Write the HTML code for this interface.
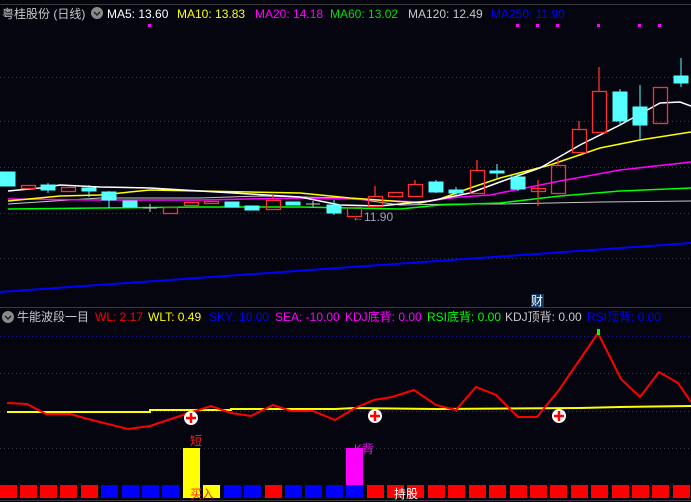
<!DOCTYPE html>
<html><head><meta charset="utf-8"><style>
html,body{margin:0;padding:0;background:#04050f;width:691px;height:502px;overflow:hidden}
svg{display:block}
text{font-family:"Liberation Sans","Noto Sans CJK SC",sans-serif;font-size:12px}
</style></head><body>
<svg width="691" height="502" viewBox="0 0 691 502">
<rect width="691" height="502" fill="#04050f"/>
<line x1="0" y1="4.5" x2="691" y2="4.5" stroke="#3a3a3a"/>
<g stroke="#3c3c46" stroke-dasharray="1 3">
<line x1="0" y1="77.5" x2="691" y2="77.5"/><line x1="0" y1="121.5" x2="691" y2="121.5"/><line x1="0" y1="167.5" x2="691" y2="167.5"/><line x1="0" y1="213.5" x2="691" y2="213.5"/><line x1="0" y1="258.5" x2="691" y2="258.5"/>
<line x1="0" y1="373.5" x2="691" y2="373.5"/><line x1="0" y1="411.5" x2="691" y2="411.5"/><line x1="0" y1="448.5" x2="691" y2="448.5"/>
</g>
<line x1="0" y1="336.5" x2="691" y2="336.5" stroke="#1a1a90" stroke-dasharray="1 3"/>
<line x1="0" y1="307.5" x2="691" y2="307.5" stroke="#3a3a3a"/>
<line x1="0" y1="500.5" x2="691" y2="500.5" stroke="#3a3a3a"/>
<!-- header -->
<circle cx="97" cy="13" r="6" fill="#8a8a8a"/><path d="M94 12 L97 15 L100 12" stroke="#222" stroke-width="1.5" fill="none"/>
<text x="2" y="18" fill="#c8c8c8">粤桂股份 (日线)</text>
<text x="107" y="18" fill="#ffffff">MA5: 13.60</text>
<text x="177" y="18" fill="#ffff00">MA10: 13.83</text>
<text x="255" y="18" fill="#ff00ff">MA20: 14.18</text>
<text x="330" y="18" fill="#00e000">MA60: 13.02</text>
<text x="408" y="18" fill="#c8c8c8">MA120: 12.49</text>
<text x="491" y="18" fill="#0000ff">MA250: 11.90</text>
<g fill="#ff00ff"><rect x="148" y="24" width="3" height="3"/><rect x="516" y="24" width="3" height="3"/><rect x="536" y="24" width="3" height="3"/><rect x="556" y="24" width="3" height="3"/><rect x="597" y="24" width="3" height="3"/><rect x="638" y="24" width="3" height="3"/><rect x="658" y="24" width="3" height="3"/></g>
<!-- MA lines -->
<polyline fill="none" stroke="#0000ff" stroke-width="2" points="0,292 691,243"/>
<polyline fill="none" stroke="#c8c8c8" points="8,204 100,198 200,198 260,196 350,198 400,205 460,204 500,204 600,202 691,201"/>
<polyline fill="none" stroke="#00ff00" stroke-width="1.5" points="8,209 100,208 200,207 300,207 400,209 440,205 500,203 560,196 620,191 691,188"/>
<polyline fill="none" stroke="#ff00ff" stroke-width="1.5" points="8,199 100,200 200,200 300,198 350,199 420,202 460,197 490,195 530,187 560,181 620,170 691,162"/>
<polyline fill="none" stroke="#ffff00" stroke-width="1.5" points="8,201 60,196 100,195 150,190 250,192 300,193 350,198 420,203 440,199 470,188 500,178 550,165 600,148 640,140 691,132"/>
<polyline fill="none" stroke="#ffffff" stroke-width="1.5" points="8,191 40,188 60,185 100,187 150,188 200,191 250,194 300,197 340,205 380,206 430,201 470,193 500,182 540,168 580,145 620,125 660,103 680,102 691,106"/>
<!-- candles -->
<g fill="#55ffff" stroke="#55ffff">
<rect x="0" y="172" width="15" height="14"/>
<line x1="48" y1="183" x2="48" y2="193"/><rect x="41" y="185" width="14" height="5"/>
<line x1="89" y1="185" x2="89" y2="197"/><rect x="82" y="188" width="14" height="3"/>
<line x1="109" y1="191" x2="109" y2="208"/><rect x="102" y="192" width="14" height="8"/>
<rect x="123" y="201" width="14" height="6"/>
<rect x="225" y="202" width="14" height="5"/>
<rect x="245" y="206" width="14" height="4"/>
<rect x="286" y="202" width="14" height="3"/>
<line x1="334" y1="200" x2="334" y2="215"/><rect x="327" y="205" width="14" height="8"/>
<line x1="436" y1="180" x2="436" y2="193"/><rect x="429" y="182" width="14" height="10"/>
<line x1="456" y1="187" x2="456" y2="196"/><rect x="449" y="190" width="14" height="3"/>
<line x1="497" y1="164" x2="497" y2="178"/><rect x="490" y="171" width="14" height="2"/>
<line x1="518" y1="173" x2="518" y2="191"/><rect x="511" y="177" width="14" height="12"/>
<line x1="620" y1="89" x2="620" y2="126"/><rect x="613" y="92" width="14" height="29"/>
<line x1="640" y1="85" x2="640" y2="139"/><rect x="633" y="107" width="14" height="18"/>
<line x1="681" y1="58" x2="681" y2="87"/><rect x="674" y="76" width="14" height="7"/>
</g>
<g fill="none" stroke="#ff3030" stroke-width="1.3">
<rect x="21.5" y="185.5" width="14" height="3"/>
<rect x="61.5" y="187.5" width="14" height="4"/>
<rect x="163.5" y="207.5" width="14" height="6"/>
<rect x="184.5" y="202.5" width="14" height="3"/>
<rect x="204.5" y="201.5" width="14" height="2"/>
<line x1="273" y1="195" x2="273" y2="200"/><rect x="266.5" y="200.5" width="14" height="9"/>
<rect x="347.5" y="207.5" width="14" height="9"/>
<line x1="375" y1="186" x2="375" y2="196"/><rect x="368.5" y="196.5" width="14" height="10"/>
<rect x="388.5" y="192.5" width="14" height="4"/>
<line x1="415" y1="180" x2="415" y2="184"/><rect x="408.5" y="184.5" width="14" height="12"/>
<line x1="538" y1="180" x2="538" y2="206"/><rect x="531.5" y="188.5" width="14" height="3"/>
<line x1="477" y1="160" x2="477" y2="170"/><rect x="470.5" y="170.5" width="14" height="23"/>
<line x1="558" y1="159" x2="558" y2="165"/><rect x="551.5" y="165.5" width="14" height="28"/>
<line x1="579" y1="121" x2="579" y2="129"/><rect x="572.5" y="129.5" width="14" height="23"/>
<line x1="599" y1="67" x2="599" y2="91"/><rect x="592.5" y="91.5" width="14" height="41"/>
<rect x="653.5" y="87.5" width="14" height="36"/>
</g>
<g stroke="#c8c8c8"><line x1="143" y1="208" x2="157" y2="208"/><line x1="150" y1="204" x2="150" y2="212"/><line x1="306" y1="204" x2="320" y2="204"/><line x1="313" y1="201" x2="313" y2="207"/></g>
<text x="352" y="221" fill="#a0a0b0">←11.90</text>
<rect x="531" y="294" width="13" height="13" fill="#0c3a6a"/><text x="531" y="305" fill="#ffffff">财</text>
<!-- indicator header -->
<circle cx="8" cy="317" r="6" fill="#8a8a8a"/><path d="M5 316 L8 319 L11 316" stroke="#222" stroke-width="1.5" fill="none"/>
<text x="17" y="321" fill="#c8c8c8">牛能波段一目</text>
<text x="95" y="321" fill="#ff0000">WL: 2.17</text>
<text x="148" y="321" fill="#ffff00">WLT: 0.49</text>
<text x="209" y="321" fill="#0000ff">SKY: 10.00</text>
<text x="275" y="321" fill="#ff00ff">SEA: -10.00</text>
<text x="345" y="321" fill="#ff00ff">KDJ底背: 0.00</text>
<text x="427" y="321" fill="#00ff00">RSI底背: 0.00</text>
<text x="505" y="321" fill="#c8c8c8">KDJ顶背: 0.00</text>
<text x="587" y="321" fill="#0000ff">RSI顶背: 0.00</text>
<!-- indicator lines -->
<polyline fill="none" stroke="#ffff00" stroke-width="2" points="7,412 150,412 150,410 231,410 231,409 335,409 355,408 436,409 580,408 620,407 691,406"/>
<polyline fill="none" stroke="#ff0000" stroke-width="2" points="7,403 27,404 46,414 70,414 88,419 128,429 150,426 189,413 211,406 231,413 251,416 273,405 291,411 313,411 335,420 355,408 374,400 392,397 414,390 436,405 456,410 476,387 496,395 518,417 537,417 559,390 598,333 621,379 640,397 659,372 678,383 691,402"/>
<rect x="597" y="329" width="3" height="6" fill="#00ff00"/>
<g><circle cx="191" cy="418" r="7" fill="#fff"/><path d="M191 413v10M186 418h10" stroke="#ff0000" stroke-width="2.5"/>
<circle cx="375" cy="416" r="7" fill="#fff"/><path d="M375 411v10M370 416h10" stroke="#ff0000" stroke-width="2.5"/>
<circle cx="559" cy="416" r="7" fill="#fff"/><path d="M559 411v10M554 416h10" stroke="#ff0000" stroke-width="2.5"/></g>
<!-- bottom bars -->
<g>
<rect x="0" y="485" width="17" height="13" fill="#ff0000"/><rect x="20" y="485" width="17" height="13" fill="#ff0000"/><rect x="40" y="485" width="17" height="13" fill="#ff0000"/><rect x="60" y="485" width="17" height="13" fill="#ff0000"/><rect x="81" y="485" width="17" height="13" fill="#ff0000"/>
<rect x="101" y="485" width="17" height="13" fill="#0000ff"/><rect x="122" y="485" width="17" height="13" fill="#0000ff"/><rect x="142" y="485" width="17" height="13" fill="#0000ff"/><rect x="162" y="485" width="17" height="13" fill="#0000ff"/>
<rect x="183" y="448" width="17" height="50" fill="#ffff00"/><rect x="203" y="485" width="17" height="13" fill="#ffff00"/>
<rect x="224" y="485" width="17" height="13" fill="#0000ff"/><rect x="244" y="485" width="17" height="13" fill="#0000ff"/>
<rect x="265" y="485" width="17" height="13" fill="#ff0000"/>
<rect x="285" y="485" width="17" height="13" fill="#0000ff"/><rect x="305" y="485" width="17" height="13" fill="#0000ff"/><rect x="326" y="485" width="17" height="13" fill="#0000ff"/>
<rect x="346" y="448" width="17" height="37" fill="#ff00ff"/><rect x="346" y="485" width="17" height="13" fill="#0000ff"/>
<rect x="367" y="485" width="17" height="13" fill="#ff0000"/><rect x="387" y="485" width="17" height="13" fill="#ff0000"/><rect x="407" y="485" width="17" height="13" fill="#ff0000"/><rect x="428" y="485" width="17" height="13" fill="#ff0000"/><rect x="448" y="485" width="17" height="13" fill="#ff0000"/><rect x="469" y="485" width="17" height="13" fill="#ff0000"/><rect x="489" y="485" width="17" height="13" fill="#ff0000"/><rect x="510" y="485" width="17" height="13" fill="#ff0000"/><rect x="530" y="485" width="17" height="13" fill="#ff0000"/><rect x="550" y="485" width="17" height="13" fill="#ff0000"/><rect x="571" y="485" width="17" height="13" fill="#ff0000"/><rect x="591" y="485" width="17" height="13" fill="#ff0000"/><rect x="612" y="485" width="17" height="13" fill="#ff0000"/><rect x="632" y="485" width="17" height="13" fill="#ff0000"/><rect x="652" y="485" width="17" height="13" fill="#ff0000"/><rect x="673" y="485" width="17" height="13" fill="#ff0000"/>
</g>
<text x="190" y="445" fill="#ff2020">短</text>
<text x="354" y="453" fill="#ff00ff">K背</text>
<text x="190" y="498" fill="#ff2020">买入</text>
<text x="394" y="498" fill="#ffffff">持股</text>
</svg>
</body></html>
